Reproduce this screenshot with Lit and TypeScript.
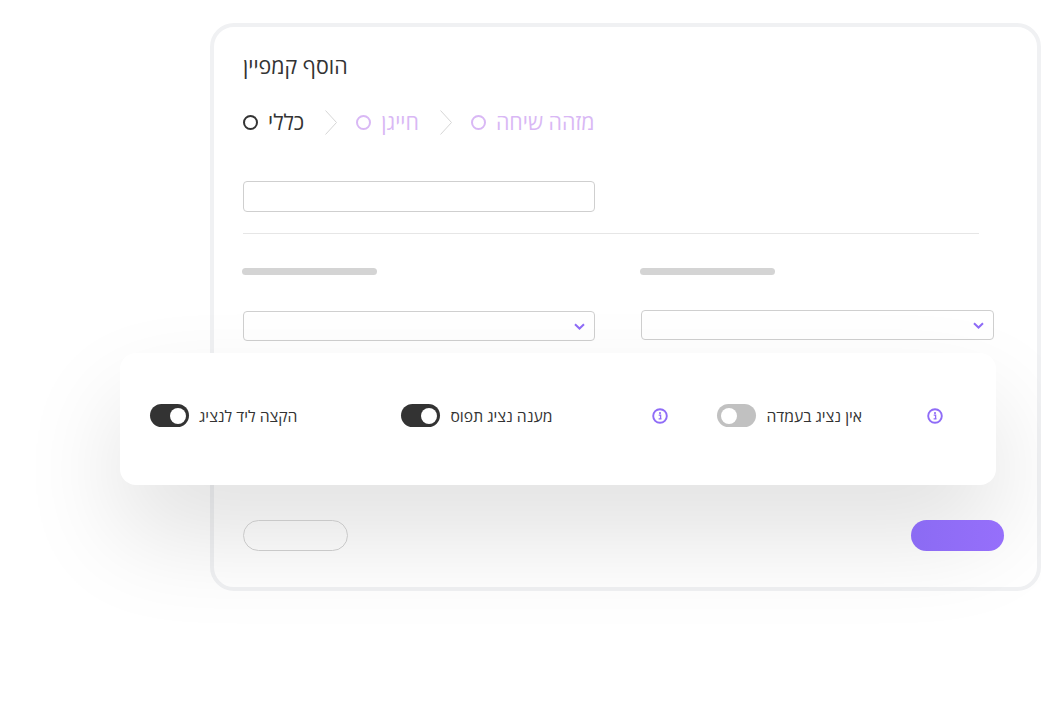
import { LitElement, html, css } from "lit";
import { customElement } from "lit/decorators.js";

const chevron = html`<svg class="chev" viewBox="0 0 11 7" width="11" height="7">
  <path d="M1 1.2 L5.5 5.5 L10 1.2" fill="none" stroke="#8f6cf7" stroke-width="2" />
</svg>`;

const info = html`<svg class="info" viewBox="0 0 16 16" width="16" height="16">
  <circle cx="8" cy="8" r="6.8" fill="none" stroke="#8f6cf7" stroke-width="1.9" />
  <circle cx="8" cy="5.1" r="1.05" fill="#8f6cf7" />
  <path d="M6.7 7.2 H8.6 V10.7 H9.5 M6.6 10.9 H9.5" fill="none" stroke="#8f6cf7" stroke-width="1.3" />
</svg>`;

const stepArrow = html`<svg class="arrow" viewBox="0 0 12 25" width="12" height="25">
  <path d="M0.5 0.5 L11.5 12.5 L0.5 24.5" fill="none" stroke="#d6d6d6" stroke-width="1" />
</svg>`;

@customElement("app-root")
export class AppRoot extends LitElement {
  static styles = css`
    :host {
      display: block;
      position: relative;
      width: 1041px;
      height: 704px;
      overflow: hidden;
      background: #fff;
      font-family: "Open Sans", "Noto Sans", "DejaVu Sans", sans-serif;
      color: #333;
    }
    .page {
      padding: 23px 0 0 210px;
    }
    .card {
      box-sizing: border-box;
      width: 831px;
      height: 568px;
      border: 4px solid #f0f1f3;
      border-radius: 24px;
      padding: 23px 0 0 29px;
      background: #fff;
    }
    .title {
      direction: rtl;
      text-align: left;
      font-size: 21.4px;
      line-height: 32px;
      width: max-content;
    }
    .steps {
      display: flex;
      align-items: center;
      height: 30px;
      margin-top: 25px;
    }
    .step {
      display: flex;
      align-items: center;
      gap: 10px;
      font-size: 21.4px;
      line-height: 30px;
      color: #d9b8f5;
    }
    .step.active {
      color: #333;
    }
    .dot {
      box-sizing: border-box;
      width: 15px;
      height: 15px;
      border: 2px solid currentColor;
      border-radius: 50%;
    }
    .arrow {
      margin: 0 19px 0 21px;
    }
    .field {
      box-sizing: border-box;
      width: 352px;
      height: 31px;
      border: 1px solid #cfcfcf;
      border-radius: 4px;
      display: flex;
      align-items: center;
      justify-content: flex-end;
      padding-right: 9px;
    }
    .top-field {
      margin-top: 44px;
    }
    hr {
      width: 736px;
      height: 1px;
      margin: 21px 0 0;
      border: 0;
      background: #e6e6e6;
    }
    .columns {
      display: grid;
      grid-template-columns: 352px 353px;
      column-gap: 46px;
      margin-top: 34px;
    }
    .bar {
      width: 135px;
      height: 7px;
      margin-left: -1px;
      border-radius: 4px;
      background: #d4d4d4;
    }
    .col .field {
      height: 30px;
      margin-top: 36px;
    }
    .col.right .field {
      width: 353px;
      margin-top: 35px;
    }
    .actions {
      position: relative;
      z-index: 1;
      display: flex;
      justify-content: space-between;
      width: 761px;
      margin-top: 179px;
    }
    .btn {
      box-sizing: border-box;
      height: 31px;
      border-radius: 16px;
    }
    .btn.ghost {
      width: 105px;
      border: 1px solid #c9c9c9;
    }
    .btn.primary {
      width: 93px;
      background: linear-gradient(90deg, #8b6bf3, #966ffb);
    }
    .panel {
      position: absolute;
      left: 120px;
      top: 353px;
      box-sizing: border-box;
      width: 876px;
      height: 132px;
      padding: 0 0 7px 30px;
      border-radius: 16px;
      background: #fff;
      box-shadow: 0 50px 100px rgba(0, 0, 0, 0.12);
      display: flex;
      align-items: center;
    }
    .option {
      display: flex;
      align-items: center;
      gap: 10px;
      font-size: 15.7px;
      line-height: 22px;
    }
    .option span {
      direction: rtl;
      white-space: nowrap;
    }
    .toggle {
      box-sizing: border-box;
      width: 39px;
      height: 23px;
      padding: 0 3.5px;
      border-radius: 12px;
      background: #333;
      display: flex;
      align-items: center;
      justify-content: flex-end;
    }
    .toggle.off {
      background: #c1c1c1;
      justify-content: flex-start;
    }
    .toggle i {
      width: 16px;
      height: 16px;
      border-radius: 50%;
      background: #fff;
    }
    .info {
      display: block;
      flex: none;
    }
    .gap-a { margin-left: 104px; }
    .gap-b { margin-left: 100px; }
    .gap-c { margin-left: 49px; }
    .gap-d { margin-left: 65px; }
  `;

  private _step(label: string, active = false) {
    return html`<div class="step ${active ? "active" : ""}">
      <div class="dot"></div>
      <span dir="rtl">${label}</span>
    </div>`;
  }

  private _option(label: string, on: boolean, cls: string) {
    return html`<div class="option ${cls}">
      <div class="toggle ${on ? "" : "off"}"><i></i></div>
      <span>${label}</span>
    </div>`;
  }

  render() {
    return html`
      <div class="page">
        <div class="card">
          <div class="title">הוסף קמפיין</div>
          <div class="steps">
            ${this._step("כללי", true)} ${stepArrow} ${this._step("חייגן")} ${stepArrow}
            ${this._step("מזהה שיחה")}
          </div>
          <div class="field top-field"></div>
          <hr />
          <div class="columns">
            <div class="col">
              <div class="bar"></div>
              <div class="field">${chevron}</div>
            </div>
            <div class="col right">
              <div class="bar"></div>
              <div class="field">${chevron}</div>
            </div>
          </div>
          <div class="actions">
            <div class="btn ghost"></div>
            <div class="btn primary"></div>
          </div>
        </div>
      </div>
      <div class="panel">
        ${this._option("הקצה ליד לנציג", true, "")} ${this._option("מענה נציג תפוס", true, "gap-a")}
        <div class="gap-b">${info}</div>
        ${this._option("אין נציג בעמדה", false, "gap-c")}
        <div class="gap-d">${info}</div>
      </div>
    `;
  }
}
